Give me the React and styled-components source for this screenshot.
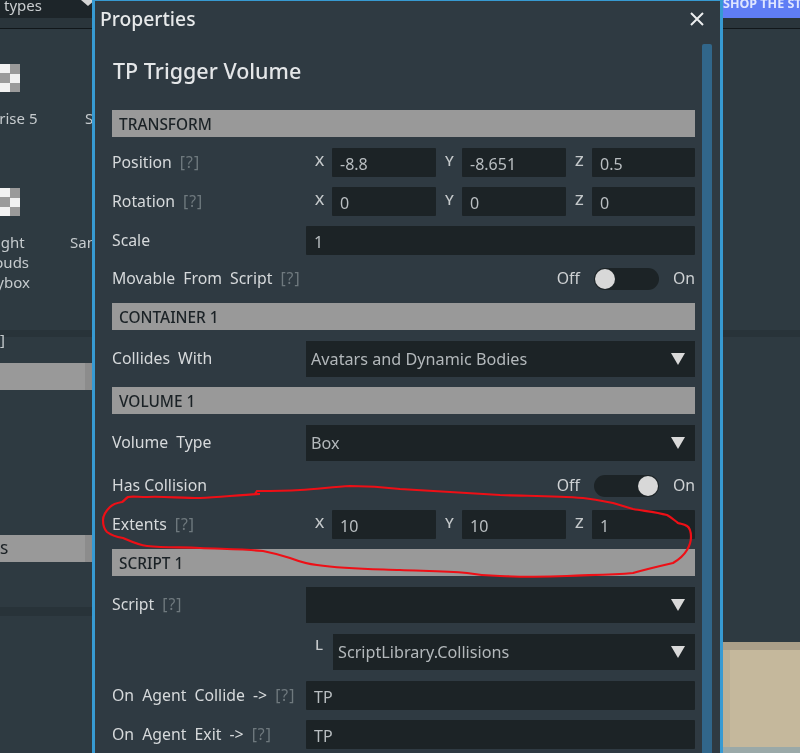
import React from "react";
import styled, { createGlobalStyle } from "styled-components";

const Global = createGlobalStyle`
  html, body { margin: 0; padding: 0; background: #2e3a41; }
  body { width: 800px; height: 753px; overflow: hidden; font-family: "Noto Sans", "Open Sans", sans-serif; }
`;

const Page = styled.div`
  position: relative;
  display: grid;
  grid-template-columns: 92px 631px 77px;
  width: 800px;
  height: 753px;
  overflow: hidden;
  background: #2e3a41;
  filter: blur(0.45px);
`;

const SidePanel = styled.div`
  display: flex;
  flex-direction: column;
  height: 753px;
  overflow: hidden;
  color: #c6cbce;
  font-size: 15px;
`;

const TopStrip = styled.div`
  height: 28px;
  flex: none;
  border-bottom: 1px solid #11171a;
  background: #2a353b;
`;

const TypeTab = styled.div`
  height: 18px;
  background: #1d2529;
  color: #c9cdcf;
  font-size: 15px;
  line-height: 10px;
  padding-left: 4px;
  display: flex;
  justify-content: space-between;
  overflow: hidden;
`;

const TabArrow = styled.span`
  width: 0;
  height: 0;
  margin: 0 -3px 0 0;
  border-left: 7px solid transparent;
  border-right: 7px solid transparent;
  border-top: 6px solid #d5d5d5;
`;

const ShopButton = styled.div`
  height: 18px;
  background: #5f7df5;
  color: #dfe6ff;
  font-size: 12.5px;
  font-weight: 700;
  line-height: 8px;
  white-space: nowrap;
  overflow: hidden;
`;

const TileRow = styled.div`
  display: flex;
  margin-top: ${(p) => p.$top}px;
  margin-left: -35px;
  height: ${(p) => p.$height}px;
  flex: none;
`;

const Tile = styled.div`
  width: 80px;
  flex: none;
  display: flex;
  flex-direction: column;
  align-items: center;
  text-align: center;
  line-height: 20px;
  white-space: nowrap;
`;

const Checker = styled.div`
  width: 30px;
  height: 28px;
  margin-bottom: 16px;
  flex: none;
  background: repeating-conic-gradient(#f1f1f1 0 25%, #9a9a9a 0 50%) 0 0 / 20px 19px;
`;

const CutLabel = styled.div`
  margin-top: ${(p) => p.$top}px;
  margin-left: ${(p) => p.$left}px;
  line-height: 20px;
  white-space: nowrap;
`;

const DimBand = styled.div`
  height: ${(p) => p.$height}px;
  margin-top: ${(p) => p.$top}px;
  background: #283339;
  flex: none;
`;

const GrayBand = styled.div`
  height: 27px;
  margin-top: ${(p) => p.$top}px;
  flex: none;
  background: linear-gradient(90deg, #999 0 85px, #8c8c8c 85px);
  color: #1c2226;
  font-size: 15px;
  font-weight: 500;
  line-height: 27px;
`;

const Dialog = styled.div`
  height: 753px;
  box-sizing: border-box;
  background: #2f3a42;
  border: 3px solid #379ad2;
  border-width: 1px 3px 0 3px;
  display: flex;
  flex-direction: column;
  overflow: hidden;
`;

const TitleBar = styled.div`
  height: 35px;
  flex: none;
  display: flex;
  align-items: center;
  justify-content: space-between;
  padding: 0 15px 0 5px;
  box-sizing: border-box;
  color: #e7e9ea;
  font-size: 19.3px;
  font-weight: 500;
`;

const BodyWrap = styled.div`
  flex: 1;
  min-height: 0;
  display: flex;
`;

const Body = styled.div`
  width: 583px;
  margin-left: 17px;
  display: flex;
  flex-direction: column;
  flex: none;
`;

const Scrollbar = styled.div`
  width: 10px;
  margin: 8px 0 0 7px;
  background: #31668a;
  border-radius: 2px 2px 0 0;
  flex: none;
`;

const Heading = styled.h1`
  margin: 17px 0 21px 1px;
  height: 36px;
  line-height: 36px;
  color: #e4e6e8;
  font-size: 21.5px;
  font-weight: 500;
`;

const SectionBar = styled.div`
  height: 27px;
  flex: none;
  box-sizing: border-box;
  padding-left: 7px;
  background: #999999;
  color: #1b2226;
  font-size: 15.4px;
  font-weight: 500;
  line-height: 29px;
  margin-bottom: ${(p) => p.$after}px;
`;

const Row = styled.div`
  display: grid;
  grid-template-columns: 194px 1fr;
  align-items: center;
  height: ${(p) => p.$height}px;
  margin-bottom: ${(p) => p.$after}px;
`;

const Label = styled.div`
  color: #d6d9db;
  font-size: 15.8px;
  line-height: 18px;
  word-spacing: ${(p) => (p.$tight ? 0 : 4)}px;
  white-space: nowrap;
  padding-bottom: 2px;
`;

const Hint = styled.span`
  color: #6f797e;
  margin-left: 8px;
  letter-spacing: 1px;
`;

const Triple = styled.div`
  display: grid;
  grid-template-columns: 26px 104px 26px 104px 26px 103px;
  align-items: center;
`;

const AxisLabel = styled.span`
  color: #c4c8ca;
  font-size: 15px;
  font-weight: 500;
  padding-left: 9px;
  padding-bottom: 5px;
`;

const Field = styled.div`
  height: 29px;
  background: #1c2326;
  border-radius: 1px;
  color: #b9bec1;
  font-size: 16px;
  line-height: 33px;
  padding-left: 8px;
  box-sizing: border-box;
`;

const SelectBox = styled.div`
  height: 36px;
  background: #1c2326;
  color: #b3b8bb;
  font-size: 16.2px;
  display: flex;
  align-items: center;
  justify-content: space-between;
  padding: 0 10px 0 5px;
`;

const LibraryRow = styled.div`
  display: grid;
  grid-template-columns: 27px 1fr;
  align-items: start;
`;

const Caret = styled.span`
  width: 0;
  height: 0;
  border-left: 7px solid transparent;
  border-right: 7px solid transparent;
  border-top: 12px solid #d9d9d9;
`;

const ToggleGroup = styled.div`
  display: flex;
  align-items: center;
  justify-content: flex-end;
  color: #cfd2d4;
  font-size: 15.8px;
  line-height: 18px;
  gap: 14px;
`;

const ToggleText = styled.span`
  padding-bottom: 3px;
`;

const Track = styled.div`
  width: 65px;
  height: 22px;
  border-radius: 11px;
  background: #1c2326;
  display: flex;
  align-items: center;
  justify-content: ${(p) => (p.$on ? "flex-end" : "flex-start")};
  padding: 0 1px;
  box-sizing: border-box;
`;

const Knob = styled.div`
  width: 20px;
  height: 20px;
  border-radius: 50%;
  background: #d8d8d8;
`;

const Sand = styled.div`
  margin-top: 305px;
  height: 105px;
  flex: none;
  box-sizing: border-box;
  border-top: 8px solid #ab9f89;
  background: linear-gradient(90deg, #bcb095 0 7px, #c5b89c 7px);
`;

const Steel = styled.div`
  flex: 1;
  background: #9aa9a8;
`;

const Scribble = styled.svg`
  position: absolute;
  left: 0;
  top: 0;
  pointer-events: none;
`;

const Close = () => (
  <svg width="16" height="16" viewBox="0 0 16 16" aria-hidden="true">
    <path d="M2 2 14 14M14 2 2 14" stroke="#eceeef" strokeWidth="2" fill="none" />
  </svg>
);

const Axes = ({ x, y, z }) => (
  <Triple>
    <AxisLabel>X</AxisLabel>
    <Field>{x}</Field>
    <AxisLabel>Y</AxisLabel>
    <Field>{y}</Field>
    <AxisLabel>Z</AxisLabel>
    <Field>{z}</Field>
  </Triple>
);

const Toggle = ({ on }) => (
  <ToggleGroup>
    <ToggleText>Off</ToggleText>
    <Track $on={on}>
      <Knob />
    </Track>
    <ToggleText>On</ToggleText>
  </ToggleGroup>
);

export default function App() {
  return (
    <>
      <Global />
      <Page>
        <SidePanel>
          <TopStrip>
            <TypeTab>
              <span>types</span>
              <TabArrow />
            </TypeTab>
          </TopStrip>
          <TileRow $top={35} $height={89}>
            <Tile>
              <Checker />
              <span>Sunrise 5</span>
            </Tile>
            <CutLabel $top={44} $left={40}>S</CutLabel>
          </TileRow>
          <TileRow $top={35} $height={142}>
            <Tile>
              <Checker />
              <span>Night</span>
              <span>Clouds</span>
              <span>Skybox</span>
            </Tile>
            <CutLabel $top={44} $left={25}>San</CutLabel>
          </TileRow>
          <DimBand $top={0} $height={7} />
          <CutLabel $top={-8} $left={0}>]</CutLabel>
          <GrayBand $top={14} />
          <GrayBand $top={145}>S</GrayBand>
          <DimBand $top={45} $height={9} />
        </SidePanel>

        <Dialog>
          <TitleBar>
            <span>Properties</span>
            <Close />
          </TitleBar>
          <BodyWrap>
            <Body>
              <Heading>TP Trigger Volume</Heading>
              <SectionBar $after={11}>TRANSFORM</SectionBar>
              <Row $height={29} $after={10}>
                <Label>Position<Hint>[?]</Hint></Label>
                <Axes x="-8.8" y="-8.651" z="0.5" />
              </Row>
              <Row $height={29} $after={10}>
                <Label>Rotation<Hint>[?]</Hint></Label>
                <Axes x="0" y="0" z="0" />
              </Row>
              <Row $height={29} $after={13}>
                <Label>Scale</Label>
                <Field>1</Field>
              </Row>
              <Row $height={22} $after={13}>
                <Label>Movable From Script<Hint>[?]</Hint></Label>
                <Toggle />
              </Row>
              <SectionBar $after={11}>CONTAINER 1</SectionBar>
              <Row $height={36} $after={10}>
                <Label>Collides With</Label>
                <SelectBox>Avatars and Dynamic Bodies<Caret /></SelectBox>
              </Row>
              <SectionBar $after={11}>VOLUME 1</SectionBar>
              <Row $height={36} $after={14}>
                <Label>Volume Type</Label>
                <SelectBox>Box<Caret /></SelectBox>
              </Row>
              <Row $height={22} $after={13}>
                <Label $tight>Has Collision</Label>
                <Toggle on />
              </Row>
              <Row $height={29} $after={10}>
                <Label>Extents<Hint>[?]</Hint></Label>
                <Axes x="10" y="10" z="1" />
              </Row>
              <SectionBar $after={11}>SCRIPT 1</SectionBar>
              <Row $height={36} $after={11}>
                <Label>Script<Hint>[?]</Hint></Label>
                <SelectBox><span /><Caret /></SelectBox>
              </Row>
              <Row $height={36} $after={11}>
                <span />
                <LibraryRow>
                  <AxisLabel>L</AxisLabel>
                  <SelectBox>ScriptLibrary.Collisions<Caret /></SelectBox>
                </LibraryRow>
              </Row>
              <Row $height={29} $after={10}>
                <Label>On Agent Collide -&gt;<Hint>[?]</Hint></Label>
                <Field>TP</Field>
              </Row>
              <Row $height={29} $after={0}>
                <Label>On Agent Exit -&gt;<Hint>[?]</Hint></Label>
                <Field>TP</Field>
              </Row>
            </Body>
            <Scrollbar />
          </BodyWrap>
        </Dialog>

        <SidePanel>
          <TopStrip>
            <ShopButton>SHOP THE STORE</ShopButton>
          </TopStrip>
          <DimBand $top={301} $height={7} />
          <Sand />
          <Steel />
        </SidePanel>

        <Scribble width="800" height="753" viewBox="0 0 800 753" aria-hidden="true">
          <path
            d="M260 494 C240 495 220 497 200 498 C180 498 160 496 147 497 C138 497 132 496 128 497 C125 499 124 501 122 502 C116 503 112 505 110 507 C106 511 103 515 103 520 C103 525 104 529 107 532 C112 536 117 537 123 538 C130 541 138 545 147 546 C165 548 182 547 200 548 C222 549 245 549 263 551 C273 553 281 555 290 558 C298 561 307 564 317 565 C345 569 372 569 400 570 C423 571 445 571 467 573 C478 575 489 576 500 576 C523 577 545 577 567 576 C589 575 611 575 633 573 C647 569 660 566 673 563 C680 559 684 555 687 550 C690 545 691 541 691 537 C691 532 690 528 687 526 C684 524 681 524 678 523 C674 520 671 517 667 515 C656 512 644 511 633 509 C626 507 620 505 613 503 C603 501 593 499 583 498 C555 496 528 496 500 495 C467 493 433 491 400 489 C383 487 367 486 350 486 C333 487 317 489 300 490 C285 491 271 491 257 491 L255 494 L260 494"
            stroke="#ee0f16"
            strokeWidth="2.2"
            fill="none"
          />
        </Scribble>
      </Page>
    </>
  );
}
